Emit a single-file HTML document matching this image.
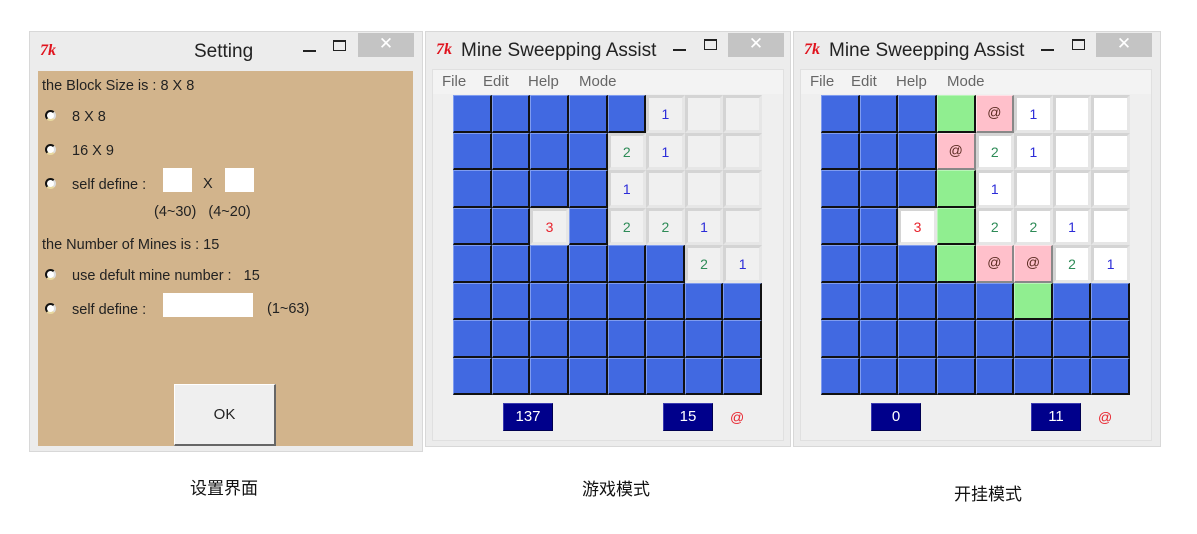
<!DOCTYPE html>
<html><head><meta charset="utf-8"><style>
*{box-sizing:border-box;margin:0;padding:0}
body{width:1197px;height:534px;background:#fff;position:relative;overflow:hidden;font-family:"Liberation Sans","Noto Sans CJK SC",sans-serif;color:#222}
.a{position:absolute}
.win{position:absolute;background:#ececec;border:1px solid #d8d8d8}
.title{position:absolute;font-size:19px;color:#222;white-space:nowrap}
.tk{position:absolute;color:#e0141e;font-style:italic;font-weight:bold;font-family:"Liberation Serif",serif;font-size:16px}
.min{position:absolute;width:13px;height:2px;background:#222}
.max{position:absolute;width:13px;height:11px;border:1px solid #222;border-top-width:2px}
.cls{position:absolute;width:56px;height:24px;background:#c4c4c4;color:#fff;font-size:17px;text-align:center;line-height:22px}
.tan{position:absolute;left:38px;top:71px;width:375px;height:375px;background:#d2b48c}
.t{position:absolute;font-size:14.5px;color:#222;white-space:nowrap}
.rad{position:absolute;width:11px;height:11px;border-radius:50%;background:#fff;border:2px solid #111;border-right-color:#ddd;border-bottom-color:#e8d8a0}
.inp{position:absolute;background:#fff}
.menu{position:absolute;height:24px;background:#f3f3f3;font-size:15px;color:#666}
.menu span{position:absolute;top:3px}
.grid{position:absolute;display:grid;grid-template-columns:repeat(8,38.625px);grid-template-rows:repeat(8,37.5px)}
.grid div{font-size:14px;text-align:center;line-height:33px}
.B{background:#4169e1;border-top:1px solid #7f9cf0;border-left:1px solid #7f9cf0;border-right:2px solid #111;border-bottom:2px solid #111}
.E{background:#f0f0f0;border:3px solid #d4d4d4;border-right-color:#e6e6e6;border-bottom-color:#e6e6e6}
.W{background:#fff;border:3px solid #d4d4d4;border-right-color:#e6e6e6;border-bottom-color:#e6e6e6}
.G{background:#90ee90;border-right:2px solid #111;border-bottom:2px solid #111;border-top:1px solid #b8f5b8;border-left:1px solid #b8f5b8}
.P{background:#ffc0cb;color:#5a2a20;border-right:2px solid #888;border-bottom:2px solid #888;border-top:1px solid #ffe0e6;border-left:1px solid #ffe0e6}
.n1{color:#2b2bd8}.n2{color:#2e8b57}.n3{color:#e8232d}
.cnt{position:absolute;width:50px;height:28px;background:#00008b;color:#fff;font-size:15px;text-align:center;line-height:26px;border:1px solid #3a3ab0;border-right-color:#000050;border-bottom-color:#000050}
.at{position:absolute;color:#e8232d;font-size:14px}
.cap{position:absolute;font-size:17px;color:#111;font-family:"Liberation Sans","Noto Sans CJK SC",sans-serif}
</style></head><body>

<!-- Setting window -->
<div class="win" style="left:29px;top:31px;width:394px;height:421px"></div>
<div class="tk" style="left:40px;top:42px">7k</div>
<div class="title" style="left:194px;top:41px">Setting</div>
<div class="min" style="left:303px;top:50px"></div>
<div class="max" style="left:333px;top:40px"></div>
<div class="cls" style="left:358px;top:33px">✕</div>
<div class="tan"></div>
<div class="t" style="left:42px;top:78px">the Block Size is : 8 X 8</div>
<div class="rad" style="left:45px;top:110px"></div><div class="t" style="left:72px;top:109px">8 X 8</div>
<div class="rad" style="left:45px;top:144px"></div><div class="t" style="left:72px;top:143px">16 X 9</div>
<div class="rad" style="left:45px;top:178px"></div><div class="t" style="left:72px;top:177px">self define :</div>
<div class="inp" style="left:163px;top:168px;width:29px;height:24px"></div>
<div class="t" style="left:203px;top:176px">X</div>
<div class="inp" style="left:225px;top:168px;width:29px;height:24px"></div>
<div class="t" style="left:154px;top:204px">(4~30)&nbsp;&nbsp; (4~20)</div>
<div class="t" style="left:42px;top:237px">the Number of Mines is : 15</div>
<div class="rad" style="left:45px;top:269px"></div><div class="t" style="left:72px;top:268px">use defult mine number :&nbsp;&nbsp; 15</div>
<div class="rad" style="left:45px;top:303px"></div><div class="t" style="left:72px;top:302px">self define :</div>
<div class="inp" style="left:163px;top:293px;width:90px;height:24px"></div>
<div class="t" style="left:267px;top:301px">(1~63)</div>
<div class="a" style="left:174px;top:384px;width:102px;height:62px;background:#efefef;border-top:1px solid #fff;border-left:1px solid #fff;border-right:2px solid #666;border-bottom:2px solid #666;font-size:15px;text-align:center;line-height:60px">OK</div>

<!-- Game window -->
<div class="win" style="left:425px;top:31px;width:366px;height:416px"></div>
<div class="tk" style="left:436px;top:41px">7k</div>
<div class="title" style="left:461px;top:40px">Mine Sweepping Assist</div>
<div class="min" style="left:673px;top:49px"></div>
<div class="max" style="left:704px;top:39px"></div>
<div class="cls" style="left:728px;top:33px">✕</div>
<div class="a" style="left:432px;top:69px;width:352px;height:372px;background:#efefef;border:1px solid #e0e0e0"></div>
<div class="menu" style="left:433px;top:70px;width:350px"><span style="left:9px">File</span><span style="left:50px">Edit</span><span style="left:95px">Help</span><span style="left:146px">Mode</span></div>
<div class="grid" style="left:453px;top:95px">
<div class="B"></div><div class="B"></div><div class="B"></div><div class="B"></div><div class="B"></div><div class="E n1">1</div><div class="E"></div><div class="E"></div>
<div class="B"></div><div class="B"></div><div class="B"></div><div class="B"></div><div class="E n2">2</div><div class="E n1">1</div><div class="E"></div><div class="E"></div>
<div class="B"></div><div class="B"></div><div class="B"></div><div class="B"></div><div class="E n1">1</div><div class="E"></div><div class="E"></div><div class="E"></div>
<div class="B"></div><div class="B"></div><div class="E n3">3</div><div class="B"></div><div class="E n2">2</div><div class="E n2">2</div><div class="E n1">1</div><div class="E"></div>
<div class="B"></div><div class="B"></div><div class="B"></div><div class="B"></div><div class="B"></div><div class="B"></div><div class="E n2">2</div><div class="E n1">1</div>
<div class="B"></div><div class="B"></div><div class="B"></div><div class="B"></div><div class="B"></div><div class="B"></div><div class="B"></div><div class="B"></div>
<div class="B"></div><div class="B"></div><div class="B"></div><div class="B"></div><div class="B"></div><div class="B"></div><div class="B"></div><div class="B"></div>
<div class="B"></div><div class="B"></div><div class="B"></div><div class="B"></div><div class="B"></div><div class="B"></div><div class="B"></div><div class="B"></div>
</div>
<div class="cnt" style="left:503px;top:403px">137</div>
<div class="cnt" style="left:663px;top:403px">15</div>
<div class="at" style="left:730px;top:409px">@</div>

<!-- Cheat window -->
<div class="win" style="left:793px;top:31px;width:368px;height:416px"></div>
<div class="tk" style="left:804px;top:41px">7k</div>
<div class="title" style="left:829px;top:40px">Mine Sweepping Assist</div>
<div class="min" style="left:1041px;top:49px"></div>
<div class="max" style="left:1072px;top:39px"></div>
<div class="cls" style="left:1096px;top:33px">✕</div>
<div class="a" style="left:800px;top:69px;width:352px;height:372px;background:#efefef;border:1px solid #e0e0e0"></div>
<div class="menu" style="left:801px;top:70px;width:350px"><span style="left:9px">File</span><span style="left:50px">Edit</span><span style="left:95px">Help</span><span style="left:146px">Mode</span></div>
<div class="grid" style="left:821px;top:95px">
<div class="B"></div><div class="B"></div><div class="B"></div><div class="G"></div><div class="P">@</div><div class="W n1">1</div><div class="W"></div><div class="W"></div>
<div class="B"></div><div class="B"></div><div class="B"></div><div class="P">@</div><div class="W n2">2</div><div class="W n1">1</div><div class="W"></div><div class="W"></div>
<div class="B"></div><div class="B"></div><div class="B"></div><div class="G"></div><div class="W n1">1</div><div class="W"></div><div class="W"></div><div class="W"></div>
<div class="B"></div><div class="B"></div><div class="W n3">3</div><div class="G"></div><div class="W n2">2</div><div class="W n2">2</div><div class="W n1">1</div><div class="W"></div>
<div class="B"></div><div class="B"></div><div class="B"></div><div class="G"></div><div class="P">@</div><div class="P">@</div><div class="W n2">2</div><div class="W n1">1</div>
<div class="B"></div><div class="B"></div><div class="B"></div><div class="B"></div><div class="B"></div><div class="G"></div><div class="B"></div><div class="B"></div>
<div class="B"></div><div class="B"></div><div class="B"></div><div class="B"></div><div class="B"></div><div class="B"></div><div class="B"></div><div class="B"></div>
<div class="B"></div><div class="B"></div><div class="B"></div><div class="B"></div><div class="B"></div><div class="B"></div><div class="B"></div><div class="B"></div>
</div>
<div class="cnt" style="left:871px;top:403px">0</div>
<div class="cnt" style="left:1031px;top:403px">11</div>
<div class="at" style="left:1098px;top:409px">@</div>

<div class="cap" style="left:190px;top:474px">设置界面</div>
<div class="cap" style="left:582px;top:475px">游戏模式</div>
<div class="cap" style="left:954px;top:480px">开挂模式</div>
</body></html>
